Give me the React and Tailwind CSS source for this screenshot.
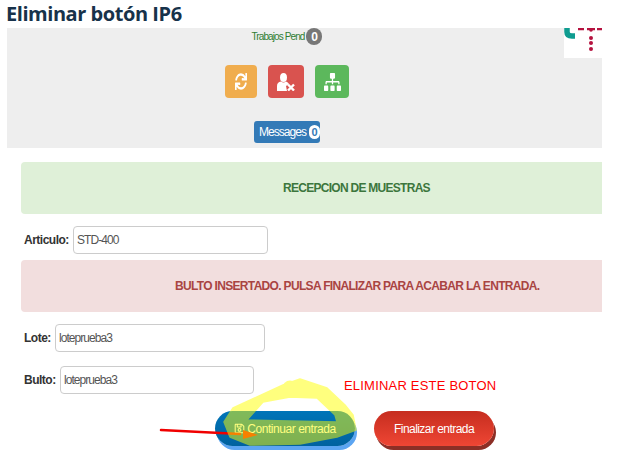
import { FaRegSave, FaSitemap, FaSync } from "react-icons/fa";

const FormRow = ({ label, value, labelWidth, inputWidth, rowClass }) => (
  <div className={`flex items-center ml-[24px] h-[28px] ${rowClass}`}>
    <label className={`text-[12px] font-bold text-[#333] tracking-[-0.5px] ${labelWidth}`}>
      {label}
    </label>
    <input
      readOnly
      value={value}
      className={`h-[28px] text-[12px] tracking-[-0.95px] text-[#555] bg-white border border-[#ccc] rounded-[4px] outline-none ${inputWidth}`}
    />
  </div>
);

const Logo = () => (
  <div className="absolute top-0 right-0 w-[38px] h-[30px] bg-white">
    <svg width="38" height="30" viewBox="0 0 38 30">
      <path d="M3 0 V4 Q3 8 8 8 H11" fill="none" stroke="#0f9c90" strokeWidth="5.5" />
      <path d="M14 1 H20 M23 1 H31 M33 1 H38" stroke="#b5123f" strokeWidth="2.5" />
      <circle cx="27" cy="2" r="1.8" fill="#b5123f" />
      <circle cx="27" cy="10" r="2" fill="#b5123f" />
      <circle cx="27" cy="15" r="2" fill="#b5123f" />
      <circle cx="27" cy="21" r="2" fill="#b5123f" />
    </svg>
  </div>
);

const UserRemove = () => (
  <svg width="18" height="18" viewBox="0 0 18 18" fill="#fff">
    <ellipse cx="6.5" cy="4.5" rx="3.5" ry="4.5" />
    <path d="M0 18 V13 Q0 9 4 8.5 Q6.5 10.5 9 8.5 Q11 9 12 11 L9 13 L10 18 Z" />
    <path d="M11 11.5 L17 17.5 M17 11.5 L11 17.5" stroke="#fff" strokeWidth="2.4" />
  </svg>
);

const Annotation = () => (
  <svg className="absolute top-0 left-0 pointer-events-none" width="623" height="462" viewBox="0 0 623 462">
    <path d="M161 430 L240 434" stroke="#f00000" strokeWidth="2.5" strokeLinecap="round" fill="none" />
    <polygon points="243,430 258,435 243,439" fill="#f00000" />
    <g opacity="0.5">
      <path
        d="M233 408 L283 385 L300 379 L327 388 L345 405 L353 415 L356 430 L337 437 L300 444 L250 445 L230 437 L224 422 Z M247 420 L337 422 L335 415 L317 398 L290 397 L263 402 Z"
        fill="#ffff00"
        fillRule="evenodd"
        stroke="#ffff00"
        strokeWidth="1.5"
        strokeLinejoin="round"
      />
      <circle cx="290" cy="388" r="7.5" fill="#ffff00" />
    </g>
  </svg>
);

export default function App() {
  return (
    <div className="relative w-[623px] h-[462px] overflow-hidden bg-white font-['Liberation_Sans',Arial,sans-serif]">
      <h1 className="h-[28px] pl-[6px] text-[20px] leading-[28px] font-bold tracking-[-0.45px] text-[#17324a] font-['Open_Sans',sans-serif]">
        Eliminar botón IP6
      </h1>

      <div className="relative ml-[7px] w-[595px] h-[120px] bg-[#eeeeee] pr-[35px] flex flex-col items-center">
        <div className="flex items-center gap-[2px] h-[17px]">
          <span className="text-[10px] tracking-[-0.9px] text-[#2e7d32]">Trabajos Pend</span>
          <span className="flex items-center justify-center w-[16px] h-[17px] rounded-full bg-[#777] text-white text-[12px] font-bold">
            0
          </span>
        </div>

        <div className="flex mt-[20px] gap-[11px]">
          <div className="flex items-center justify-center w-[32px] h-[33px] rounded-[4px] bg-[#f0ad4e] text-white">
            <FaSync className="w-[12px] h-[17px]" preserveAspectRatio="none" />
          </div>
          <div className="flex items-center justify-center w-[36px] h-[33px] rounded-[4px] bg-[#d9534f] text-white">
            <UserRemove />
          </div>
          <div className="flex items-center justify-center w-[34px] h-[33px] rounded-[4px] bg-[#5cb85c] text-white">
            <FaSitemap className="w-[17px] h-[18px]" preserveAspectRatio="none" />
          </div>
        </div>

        <div className="flex items-center gap-[3px] mt-[23px] w-[66px] h-[22px] pl-[5px] rounded-[3px] bg-[#337ab7] text-white text-[12px] tracking-[-0.95px]">
          <span>Messages</span>
          <span className="flex items-center justify-center w-[13px] h-[14px] rounded-full bg-white text-[#337ab7] text-[11px] font-bold tracking-normal">
            0
          </span>
        </div>

        <Logo />
      </div>

      <div className="ml-[21px] mt-[14px] w-[581px] h-[52px] pl-[262px] flex items-center bg-[#dff0d8] rounded-l-[4px] text-[12px] font-bold tracking-[-0.72px] text-[#3c763d]">
        RECEPCION DE MUESTRAS
      </div>

      <FormRow label="Articulo:" value="STD-400" labelWidth="w-[49px]" inputWidth="w-[195px] px-[3px]" rowClass="mt-[12px]" />

      <div className="ml-[21px] mt-[6px] w-[581px] h-[52px] pl-[154px] flex items-center bg-[#f2dede] rounded-l-[4px] text-[12px] font-bold tracking-[-0.67px] text-[#a94442]">
        BULTO INSERTADO. PULSA FINALIZAR PARA ACABAR LA ENTRADA.
      </div>

      <FormRow label="Lote:" value="loteprueba3" labelWidth="w-[31px]" inputWidth="w-[210px] px-[3px]" rowClass="mt-[12px]" />
      <FormRow label="Bulto:" value="loteprueba3" labelWidth="w-[36px]" inputWidth="w-[194px] px-[3px]" rowClass="mt-[14px]" />

      <div className="flex ml-[215px] mt-[17px] gap-[19px]">
        <button className="flex items-center justify-center gap-[2px] w-[140px] h-[35px] rounded-[18px] bg-linear-to-b from-[#0074b8] to-[#00629f] text-white text-[12px] tracking-[-0.45px] shadow-[2px_4px_0_#5ca5f2]">
          <FaRegSave className="text-[11px]" />
          Continuar entrada
        </button>
        <button className="flex items-center justify-center w-[120px] h-[35px] rounded-[18px] bg-linear-to-b from-[#c62d1f] to-[#ef4634] text-white text-[12px] tracking-[-0.55px] shadow-[2px_4px_0_#8c2f26]">
          Finalizar entrada
        </button>
      </div>

      <span className="absolute left-[344px] top-[376px] text-[13px] tracking-[0.2px] text-[#ff0000]">ELIMINAR ESTE BOTON</span>
      <Annotation />
    </div>
  );
}
